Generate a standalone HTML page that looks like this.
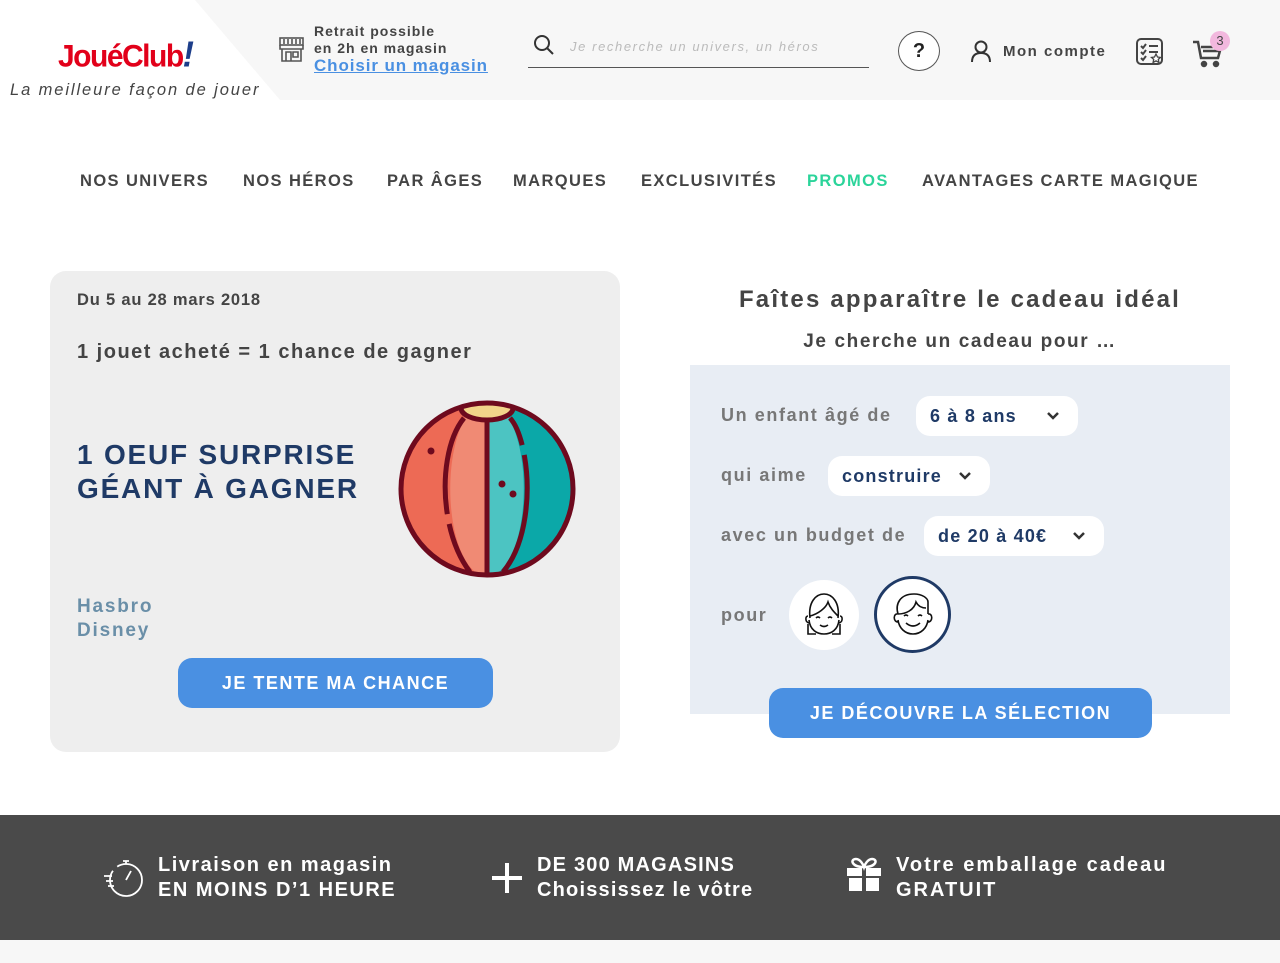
<!DOCTYPE html>
<html><head><meta charset="utf-8">
<style>
*{margin:0;padding:0;box-sizing:border-box}
body{width:1280px;height:963px;background:#fff;font-family:"Liberation Sans",sans-serif;position:relative;overflow:hidden;color:#444}
.abs{position:absolute}
.hdr{left:0;top:0;width:1280px;height:100px;background:#f7f7f7}
.nav span{position:absolute;top:172px;font-size:16.5px;font-weight:bold;letter-spacing:1.4px;color:#444}
.card{left:50px;top:271px;width:570px;height:481px;background:#eeeeee;border-radius:16px}
.panel{left:690px;top:365px;width:540px;height:349px;background:#e8edf4}
.lbl{font-size:18px;color:#777;letter-spacing:1.6px;font-weight:bold}
.sel{background:#fff;border-radius:14px;height:40px;color:#1f3a66;font-weight:bold;font-size:18px;letter-spacing:1.2px;line-height:40px;padding-left:14px}
.sel svg{position:absolute;right:18px;top:15px}
.btn{background:#4a90e2;color:#fff;border-radius:14px;font-weight:bold;font-size:18px;letter-spacing:1.5px;text-align:center;line-height:50px;height:50px}
.foot{left:0;top:815px;width:1280px;height:125px;background:#4a4a4a}
.ft{color:#fff;font-size:20px;letter-spacing:1.5px;line-height:25px;font-weight:bold}
</style></head><body>
<div class="abs hdr"></div>
<svg class="abs" style="left:0;top:0" width="290" height="100"><polygon points="0,0 195,0 280,100 0,100" fill="#fff"/></svg>
<div class="abs" style="left:58px;top:36px;font-family:'Liberation Sans';font-weight:bold;font-size:30px;color:#e2001a;letter-spacing:-1.5px;transform:scaleY(1.05)">JouéClub<span style="color:#1d3e8a;font-style:italic;font-size:34px">!</span></div>
<div class="abs" style="left:10px;top:81px;font-size:16.5px;font-style:italic;color:#444;letter-spacing:1.9px">La meilleure façon de jouer</div>
<svg class="abs" style="left:278px;top:37px" width="27" height="26" viewBox="0 0 27 26" fill="none" stroke="#555" stroke-width="1.6"><rect x="2" y="1" width="23" height="7"/><path d="M2 8 v4 h23 v-4 M4 12 v12 h19 v-12 M8 24 v-9 h5 v9 M15 15 h5 v5 h-5z M6 2 v5 M10 2 v5 M14 2 v5 M18 2 v5 M22 2v5"/></svg>
<div class="abs" style="left:314px;top:23px;font-size:14px;font-weight:bold;color:#444;letter-spacing:1px;line-height:17px">Retrait possible<br>en 2h en magasin</div>
<div class="abs" style="left:314px;top:56px;font-size:17px;font-weight:bold;color:#4a90e2;letter-spacing:.9px;text-decoration:underline">Choisir un magasin</div>
<svg class="abs" style="left:533px;top:34px" width="22" height="22" fill="none" stroke="#333" stroke-width="2"><circle cx="9" cy="9" r="7"/><path d="M14 14 l6 6"/></svg>
<div class="abs" style="left:570px;top:39px;font-size:13px;font-style:italic;color:#bbb;letter-spacing:1.6px">Je recherche un univers, un héros</div>
<div class="abs" style="left:528px;top:67px;width:341px;height:1px;background:#555"></div>
<div class="abs" style="left:898px;top:31px;width:42px;height:40px;border:1px solid #555;border-radius:50%;background:#fff;text-align:center;line-height:38px;font-weight:bold;font-size:20px;color:#222">?</div>
<svg class="abs" style="left:970px;top:40px" width="22" height="22" fill="none" stroke="#333" stroke-width="2"><circle cx="11" cy="7" r="5.5"/><path d="M2 22 c0-7 4-9 9-9 s9 2 9 9"/></svg>
<div class="abs" style="left:1003px;top:43px;font-size:15px;font-weight:bold;color:#444;letter-spacing:1.5px">Mon compte</div>
<svg class="abs" style="left:1136px;top:38px" width="28" height="28" fill="none" stroke="#444" stroke-width="2"><rect x="1" y="1" width="25" height="25" rx="4"/><path d="M5 8 l2 2 3-4 M5 14 l2 2 3-4 M5 20 l2 2 3-4 M13 8 h9 M13 14 h9"/><path d="M20 16 l1.5 3 3 .4-2.2 2 .6 3-2.9-1.5-2.9 1.5.6-3-2.2-2 3-.4z" fill="#fff" stroke-width="1.3"/></svg>
<svg class="abs" style="left:1192px;top:40px" width="32" height="28" fill="none" stroke="#444" stroke-width="2.5"><path d="M1 2 h5 l3 16 h17 l3-11 h-20 M11 11 h16"/><circle cx="12" cy="24" r="2" fill="#444"/><circle cx="24" cy="24" r="2" fill="#444"/></svg>
<div class="abs" style="left:1210px;top:31px;width:20px;height:20px;border-radius:50%;background:#f2b8de;text-align:center;line-height:20px;font-size:13px;color:#444">3</div>

<div class="nav">
<span style="left:80px">NOS UNIVERS</span>
<span style="left:243px">NOS HÉROS</span>
<span style="left:387px">PAR ÂGES</span>
<span style="left:513px">MARQUES</span>
<span style="left:641px">EXCLUSIVITÉS</span>
<span style="left:807px;color:#2bd49a">PROMOS</span>
<span style="left:922px">AVANTAGES CARTE MAGIQUE</span>
</div>

<div class="abs card"></div>
<div class="abs" style="left:77px;top:291px;font-size:16.5px;font-weight:bold;color:#444;letter-spacing:.8px">Du 5 au 28 mars 2018</div>
<div class="abs" style="left:77px;top:341px;font-size:20px;font-weight:bold;color:#444;letter-spacing:1.5px">1 jouet acheté = 1 chance de gagner</div>
<div class="abs" style="left:77px;top:438px;font-size:28px;font-weight:bold;color:#1f3a66;letter-spacing:1.8px;line-height:34px">1 OEUF SURPRISE<br>GÉANT À GAGNER</div>
<svg class="abs" style="left:398px;top:400px" width="178" height="178" viewBox="0 0 178 178">
<defs><clipPath id="c"><circle cx="89" cy="89" r="86"/></clipPath></defs>
<g clip-path="url(#c)">
<rect x="0" y="0" width="89" height="178" fill="#ed6a55"/>
<path d="M89 0 C40 10 40 168 89 178z" fill="#f08a74"/>
<rect x="89" y="0" width="89" height="178" fill="#0ba8a8"/>
<path d="M89 0 C138 10 138 168 89 178z" fill="#4cc4c2"/>
<ellipse cx="89" cy="8" rx="26" ry="12" fill="#f2d48a" stroke="#6e0a1e" stroke-width="5"/>
</g>
<circle cx="89" cy="89" r="86" fill="none" stroke="#6e0a1e" stroke-width="5"/>
<line x1="89" y1="18" x2="89" y2="176" stroke="#6e0a1e" stroke-width="5"/>
<path d="M66 18 C40 50 40 130 72 172" fill="none" stroke="#6e0a1e" stroke-width="5" stroke-dasharray="100 10 200"/>
<path d="M112 18 C132 40 140 130 105 172" fill="none" stroke="#6e0a1e" stroke-width="5" stroke-dasharray="30 10 200"/>
<circle cx="33" cy="51" r="3.5" fill="#6e0a1e"/><circle cx="104" cy="84" r="3.5" fill="#6e0a1e"/><circle cx="115" cy="94" r="3.5" fill="#6e0a1e"/>
</svg>
<div class="abs" style="left:77px;top:595px;font-size:19px;font-weight:bold;color:#6a8fa8;letter-spacing:1.8px;line-height:24px">Hasbro<br>Disney</div>
<div class="abs btn" style="left:178px;top:658px;width:315px">JE TENTE MA CHANCE</div>

<div class="abs" style="left:690px;top:286px;width:540px;text-align:center;font-size:24px;font-weight:bold;color:#444;letter-spacing:2.2px">Faîtes apparaître le cadeau idéal</div>
<div class="abs" style="left:690px;top:331px;width:540px;text-align:center;font-size:19px;font-weight:bold;color:#444;letter-spacing:1.6px">Je cherche un cadeau pour …</div>
<div class="abs panel"></div>
<div class="abs lbl" style="left:721px;top:405px">Un enfant âgé de</div>
<div class="abs sel" style="left:916px;top:396px;width:162px">6 à 8 ans<svg width="14" height="10"><path d="M2 2 l5 5 5-5" fill="none" stroke="#333" stroke-width="2.5"/></svg></div>
<div class="abs lbl" style="left:721px;top:465px">qui aime</div>
<div class="abs sel" style="left:828px;top:456px;width:162px">construire<svg width="14" height="10"><path d="M2 2 l5 5 5-5" fill="none" stroke="#333" stroke-width="2.5"/></svg></div>
<div class="abs lbl" style="left:721px;top:525px">avec un budget de</div>
<div class="abs sel" style="left:924px;top:516px;width:180px">de 20 à 40€<svg width="14" height="10"><path d="M2 2 l5 5 5-5" fill="none" stroke="#333" stroke-width="2.5"/></svg></div>
<div class="abs lbl" style="left:721px;top:605px">pour</div>
<div class="abs" style="left:789px;top:580px;width:70px;height:70px;border-radius:50%;background:#fff"></div>
<svg class="abs" style="left:800px;top:590px" width="48" height="50" fill="none" stroke="#111" stroke-width="1.6"><path d="M10 28 c-2-16 6-24 14-24 s16 8 14 24 M8 26 c-3 0-3 6 1 7 M40 26 c3 0 3 6-1 7 M10 26 c8-2 16-8 18-14 c2 6 6 10 10 14 M9 30 c1 10 8 14 15 14 s14-4 15-14 M8 34 v10 h8 M40 34 v10 h-8 M16 28 q2-2 4 0 M28 28 q2-2 4 0 M20 35 q4 3 8 0"/></svg>
<div class="abs" style="left:874px;top:576px;width:77px;height:77px;border-radius:50%;background:#fff;border:3px solid #1f3a66"></div>
<svg class="abs" style="left:888px;top:590px" width="50" height="50" fill="none" stroke="#111" stroke-width="1.6"><path d="M10 24 c-3-10 2-20 16-20 c8 0 14 4 14 8 v12 M10 24 c8 0 16-4 18-12 c2 4 6 6 10 6 M10 24 c-5-1-5 8 0 8 M40 24 c5-1 5 8 0 8 M10 30 c1 8 7 14 15 14 s14-6 15-14 M16 26 q2-2 4 0 M30 26 q2-2 4 0 M18 33 q7 6 14 0"/></svg>
<div class="abs btn" style="left:769px;top:688px;width:383px">JE DÉCOUVRE LA SÉLECTION</div>

<div class="abs foot"></div>
<div class="abs" style="left:0;top:940px;width:1280px;height:23px;background:#f7f7f7"></div>
<svg class="abs" style="left:102px;top:856px" width="42" height="44" fill="none" stroke="#fff" stroke-width="1.8"><circle cx="24" cy="24" r="16" stroke-dasharray="60 6"/><path d="M21 5 h6 M24 5 v3 M24 24 l5-9 M2 20 h8 M4 25 h7 M6 30 h6"/></svg>
<div class="abs ft" style="left:158px;top:853px">Livraison en magasin<br>EN MOINS D’1 HEURE</div>
<svg class="abs" style="left:492px;top:863px" width="30" height="30"><path d="M15 0 v30 M0 15 h30" stroke="#fff" stroke-width="4"/></svg>
<div class="abs ft" style="left:537px;top:853px;letter-spacing:1.2px">DE 300 MAGASINS<br>Choississez le vôtre</div>
<svg class="abs" style="left:846px;top:857px" width="36" height="36" fill="#fff"><path d="M10 2 c-6 0-5 8 8 8 c13 0 14-8 8-8 c-4 0-7 5-8 8 c-1-3-4-8-8-8z" fill="none" stroke="#fff" stroke-width="2.5"/><rect x="1" y="11" width="15" height="8"/><rect x="20" y="11" width="15" height="8"/><rect x="3" y="21" width="13" height="13"/><rect x="20" y="21" width="13" height="13"/></svg>
<div class="abs ft" style="left:896px;top:853px;letter-spacing:2px">Votre emballage cadeau<br>GRATUIT</div>
</body></html>
